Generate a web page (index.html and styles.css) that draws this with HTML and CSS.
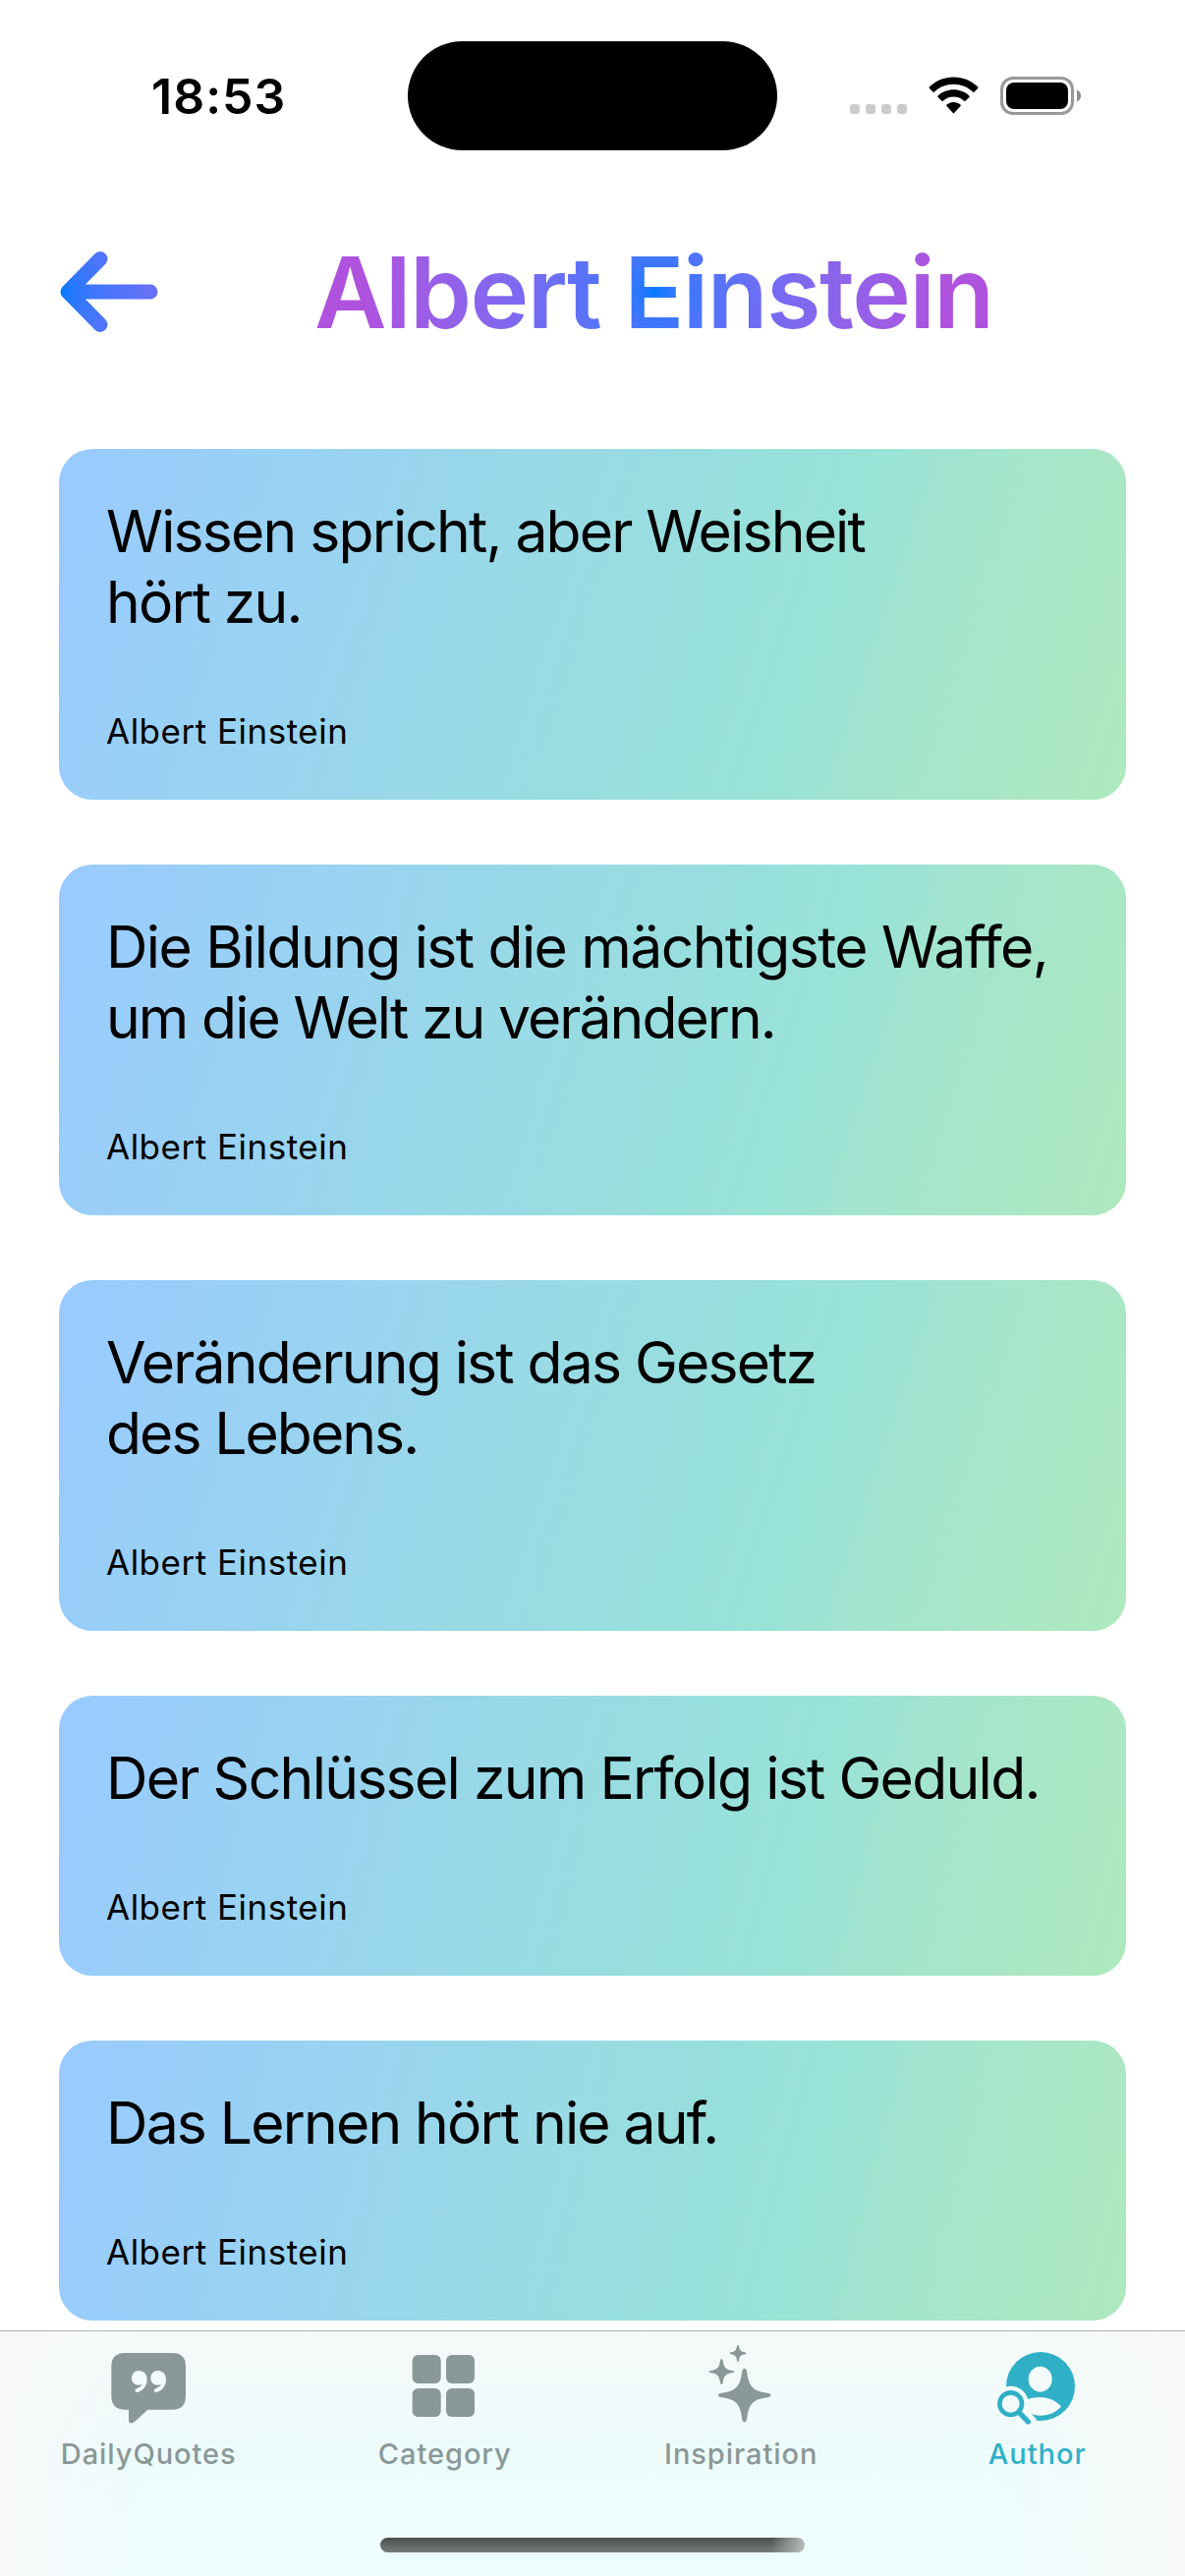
FILE: index.html
```html
<!DOCTYPE html>
<html lang="de">
<head>
<meta charset="utf-8">
<title>Albert Einstein</title>
<link rel="stylesheet" href="styles.css">
</head>
<body>
<div class="screen">
  <header class="status">
    <span class="time">18:53</span>
    <div class="island"></div>
    <div class="indicators">
      <svg class="dots" width="58" height="10" viewBox="0 0 58 10"><g fill="#cbcbcb"><rect width="10" height="10" rx="3.3"/><rect x="16" width="10" height="10" rx="3.3"/><rect x="32" width="10" height="10" rx="3.3"/><rect x="48" width="10" height="10" rx="3.3"/></g></svg>
      <svg class="wifi" width="51" height="38" viewBox="0 0 51 38"><path d="M25.500 0.500C16 .5 7.300 4.200.9 10.300q-.8.800 0 1.600l3.500 3.600q.8.800 1.600 0C11.200 10.600 18 7.800 25.500 7.800s14.300 2.800 19.500 7.700q.8.800 1.600 0l3.500-3.600q.8-.8 0-1.600C43.700 4.200 35 .5 25.500.5ZM25.500 13.300c-6.100 0-11.700 2.300-15.900 6.100q-.8.800 0 1.600l3.600 3.600q.8.700 1.600.1c2.900-2.500 6.600-4.100 10.700-4.100s7.800 1.600 10.700 4.100q.8.600 1.600-.1l3.600-3.600q.8-.8 0-1.600c-4.200-3.800-9.800-6.100-15.900-6.100ZM25.500 26c-2.700 0-5.100.9-7 2.500q-.8.700 0 1.500l6.400 6.900q.6.600 1.200 0l6.400-6.900q.8-.8 0-1.500c-1.900-1.600-4.300-2.500-7-2.500Z"/></svg>
      <svg class="battery" width="82" height="39" viewBox="0 0 82 39"><rect x="1.500" y="1.500" width="72" height="36" rx="11.500" fill="none" stroke="#999" stroke-width="3"/><rect x="6" y="6" width="63" height="27" rx="8"/><path d="M78 13.500c5.400 2.400 5.400 9.600 0 12Z" fill="#8c8c8c"/></svg>
    </div>
  </header>

  <div class="titlebar">
    <svg class="back" width="102" height="84" viewBox="0 0 102 84">
      <defs><radialGradient id="tint" gradientUnits="userSpaceOnUse" cx="1" cy="42" r="100"><stop offset="0" stop-color="#007aff"/><stop offset=".125" stop-color="#2479fe"/><stop offset=".25" stop-color="#3577fc"/><stop offset=".5" stop-color="#4c75fa"/><stop offset="1" stop-color="#6a70f4"/></radialGradient></defs>
      <path d="M42 8.500 9 42l33 33.500M10 42h83" fill="none" stroke="url(#tint)" stroke-width="15" stroke-linecap="round" stroke-linejoin="round"/>
    </svg>
    <h1 class="title">Albert Einstein</h1>
  </div>

  <main class="quotes">
    <article class="card"><p class="quote">Wissen spricht, aber Weisheit<br>hört zu.</p><p class="by">Albert Einstein</p></article>
    <article class="card"><p class="quote"><span class="loose">Die Bildung ist die mächtigste Waffe,</span><br><span class="tight">um die Welt zu verändern.</span></p><p class="by">Albert Einstein</p></article>
    <article class="card"><p class="quote">Veränderung ist das Gesetz<br><span class="tight">des Lebens.</span></p><p class="by">Albert Einstein</p></article>
    <article class="card short"><p class="quote"><span class="open">Der Schlüssel zum Erfolg ist Geduld.</span></p><p class="by">Albert Einstein</p></article>
    <article class="card short"><p class="quote">Das Lernen hört nie auf.</p><p class="by">Albert Einstein</p></article>
  </main>

  <footer class="tabbar">
    <nav class="tabs">
      <div class="tab"><svg width="120" height="107" viewBox="0 9 360 321"><path d="M109 75H253Q294 75 294 116V207Q294 248 253 248H178L138 285Q120 296 120 278V248H109Q67 248 67 207V116Q67 75 109 75Z"/><g class="cut"><path d="M151 129c-13 0-22 10-22 23 0 12 9 21 21 21 5 0 9-1 12-4-3 7-9 12-18 15-7 3-6 12 3 11 17-4 29-20 29-39 0-16-10-27-25-27Z"/><path d="M209 129c-13 0-22 10-22 23 0 12 9 21 21 21 5 0 9-1 12-4-3 7-9 12-18 15-7 3-6 12 3 11 17-4 29-20 29-39 0-16-10-27-25-27Z"/></g></svg><span class="label">DailyQuotes</span></div>
      <div class="tab"><svg width="120" height="107" viewBox="0 0 360 321"><rect x="83" y="72" width="87" height="87" rx="17"/><rect x="186" y="72" width="87" height="87" rx="17"/><rect x="83" y="174" width="87" height="87" rx="17"/><rect x="186" y="174" width="87" height="87" rx="17"/></svg><span class="label">Category</span></div>
      <div class="tab"><svg width="120" height="107" viewBox="-19 9 360 321"><path d="M172 122q6 0 7 8c6 48 18 62 66 68q8 1 8 6t-8 6c-48 6-60 20-66 68q-1 8-7 8t-7-8c-6-48-18-62-66-68q-8-1-8-6t8-6c48-6 60-20 66-68q1-8 7-8ZM102 93q3 0 4 5c3 22 9 28 31 31q4 1 4 3t-4 3c-22 3-28 9-31 31q-1 5-4 5t-4-5c-3-22-9-28-31-31q-4-1-4-3t4-3c22-3 28-9 31-31q1-5 4-5ZM152 50q2 0 3 4c2 13 6 17 19 19q3 1 3 3t-3 3c-13 2-17 6-19 19q-1 4-3 4t-3-4c-2-13-6-17-19-19q-3-1-3-3t3-3c13-2 17-6 19-19q1-4 3-4Z"/></svg><span class="label">Inspiration</span></div>
      <div class="tab active"><svg width="120" height="107" viewBox="-14 9 360 321"><circle cx="178" cy="177" r="105"/><g class="cut"><ellipse cx="177" cy="155" rx="36" ry="39"/><path d="M138 217C165 206 196 208 220 221Q237 231 241 239C222 258 200 266 177 266Q163 266 150 262L120 250Z"/><circle cx="87" cy="230" r="54"/></g><path class="gap" d="M115 257 149 293"/><circle class="lens" cx="87" cy="230" r="34"/><path class="handle" d="M113 257 140 285"/></svg><span class="label">Author</span></div>
    </nav>
    <div class="home"></div>
  </footer>
</div>
</body>
</html>
```
FILE: styles.css
```css
* { box-sizing: border-box; margin: 0; padding: 0; }
body { background: #fff; color: #000; font-family: Inter, "Liberation Sans", sans-serif; }
svg { display: block; flex: none; }
.screen { width: 1206px; height: 2622px; display: flex; flex-direction: column; overflow: hidden; background: #fff; }

.status { height: 194px; padding-top: 41.5px; display: grid; grid-template-columns: 415px 376px 415px; align-items: start; }
.time { padding: 26px 0 0 154px; font-size: 50px; line-height: 60px; font-weight: 600; letter-spacing: 1px; }
.island { height: 111px; border-radius: 55.5px; background: #000; }
.indicators { display: flex; padding: 36.5px 0 0 74px; }
.dots { margin-top: 28px; }
.wifi { margin-left: 22px; }
.battery { margin-left: 22px; }

.titlebar { height: 263px; padding: 0 60px 57px; display: flex; align-items: center; gap: 158px; }
.title { font-size: 101px; line-height: 124px; font-weight: 600; letter-spacing: -1.5px; white-space: nowrap; color: transparent; background: radial-gradient(circle 300px at 346px 50% in srgb-linear, #007aff, #af52de); -webkit-background-clip: text; background-clip: text; }

.quotes { flex: none; height: 1915px; padding: 0 60px; display: flex; flex-direction: column; gap: 66px; }
.card { --tones: #99caff, #98e0dc 60%, #9ae3d6 71%, #a2e4d0 76%, #aee9bd; flex: none; padding: 48px; border-radius: 34px; display: flex; flex-direction: column; gap: 74px; background: linear-gradient(108.2deg, var(--tones)); }
.card.short { background: linear-gradient(104.7deg, var(--tones)); }
.quote { font-size: 58.8px; line-height: 72px; letter-spacing: -1.8px; white-space: nowrap; }
.loose { letter-spacing: -1.57px; }
.open { letter-spacing: -1.69px; }
.tight { letter-spacing: -1.92px; }
.by { font-size: 35px; line-height: 43px; letter-spacing: 0.5px; }

.tabbar { height: 250px; flex: none; border-top: 1px solid #b0b5b5; display: flex; flex-direction: column; align-items: center; background: linear-gradient(90deg, #f7f8f9 0, #f7f8f900 12%, #f7f9f800 84%, #f7f9f8 100%), linear-gradient(#f5f9f9, #edfbfb 50%, #eefdfd); }
.tabs { width: 1206px; display: grid; grid-template-columns: repeat(4, 1fr); height: 210px; }
.tab { display: flex; flex-direction: column; align-items: center; color: #8a9897; fill: currentColor; }
.tab.active { color: #30b0c7; }
.cut { fill: #f3fbfb; }
.gap { fill: none; stroke: #f3fbfb; stroke-width: 46; }
.lens { fill: none; stroke: currentColor; stroke-width: 14; }
.handle { fill: none; stroke: currentColor; stroke-width: 16; stroke-linecap: round; }
.label { font-size: 29px; line-height: 36px; font-weight: 500; letter-spacing: 0.95px; margin-right: -0.95px; }
.home { width: 432px; height: 15px; border-radius: 8px; background: linear-gradient(90deg, #c0c4c400 92%, #b8bdbd), linear-gradient(#4a4e4e, #757a7a); }
```
